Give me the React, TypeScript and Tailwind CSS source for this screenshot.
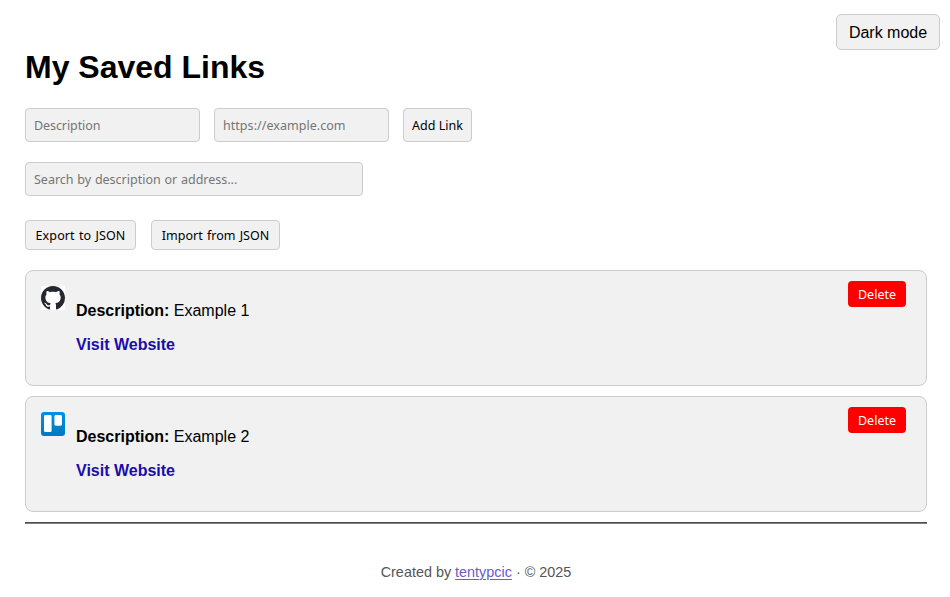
import type { ReactNode } from "react";

const links = [
  { id: 1, description: "Example 1", icon: "github" },
  { id: 2, description: "Example 2", icon: "trello" },
];

function GitHubIcon() {
  return (
    <svg className="block size-6 bg-white" viewBox="0 0 16 16" fill="#24292f" aria-hidden="true">
      <path d="M8 0C3.58 0 0 3.58 0 8c0 3.54 2.29 6.53 5.47 7.59.4.07.55-.17.55-.38 0-.19-.01-.82-.01-1.49-2.01.37-2.53-.49-2.69-.94-.09-.23-.48-.94-.82-1.13-.28-.15-.68-.52-.01-.53.63-.01 1.08.58 1.23.82.72 1.21 1.87.87 2.33.66.07-.52.28-.87.51-1.07-1.78-.2-3.64-.89-3.64-3.95 0-.87.31-1.59.82-2.15-.08-.2-.36-1.02.08-2.12 0 0 .67-.21 2.2.82.64-.18 1.32-.27 2-.27s1.36.09 2 .27c1.53-1.04 2.2-.82 2.2-.82.44 1.1.16 1.92.08 2.12.51.56.82 1.27.82 2.15 0 3.07-1.87 3.75-3.65 3.95.29.25.54.73.54 1.48 0 1.07-.01 1.93-.01 2.2 0 .21.15.46.55.38A8.01 8.01 0 0 0 16 8c0-4.42-3.58-8-8-8z" />
    </svg>
  );
}

function TrelloIcon() {
  return (
    <svg className="block size-6" viewBox="0 0 24 24" aria-hidden="true">
      <defs>
        <linearGradient id="trello-blue" x1="0" y1="0" x2="0" y2="1">
          <stop offset="0" stopColor="#0091e6" />
          <stop offset="1" stopColor="#0079bf" />
        </linearGradient>
      </defs>
      <rect width="24" height="24" rx="3" fill="url(#trello-blue)" />
      <rect x="3" y="3.1" width="7.6" height="17" rx="1.4" fill="#fff" />
      <rect x="13.4" y="3.1" width="7.6" height="10.6" rx="1.4" fill="#fff" />
    </svg>
  );
}

const control =
  "block rounded border border-[#ccc] bg-[#f1f1f1] font-['Noto_Sans',sans-serif] text-[12.5px] outline-none";
const field = `${control} h-[34px] px-2 [word-spacing:0.5px] placeholder:text-[#757575]`;

function Button({ className, children }: { className: string; children: ReactNode }) {
  return (
    <button className={`${control} whitespace-nowrap pt-0.5 text-center text-black ${className}`}>{children}</button>
  );
}

export default function App() {
  return (
    <div className="h-[597px] overflow-hidden bg-white pl-[25px] pr-[23px] font-['Liberation_Sans',Arial,sans-serif] text-base leading-[18px] text-black">
      <button className="absolute right-[10px] top-[14px] h-9 w-[104px] rounded-[5px] border border-[#ccc] bg-[#f1f1f1] pt-0.5 text-center">
        Dark mode
      </button>
      <h1 className="pt-12 text-[32px] font-bold leading-[38px]">My Saved Links</h1>
      <div className="mt-[22px] flex gap-[14px]">
        <input className={`${field} w-[175px] tracking-[-0.08px]`} placeholder="Description" />
        <input className={`${field} w-[175px] tracking-[0.04px]`} placeholder="https://example.com" />
        <Button className="h-[34px] w-[69px]">Add Link</Button>
      </div>
      <input className={`${field} mt-5 w-[338px]`} placeholder="Search by description or address..." />
      <div className="mt-6 flex gap-[15px]">
        <Button className="h-[30px] w-[111px] tracking-[0.12px] [word-spacing:0.8px]">Export to JSON</Button>
        <Button className="h-[30px] w-[129px] [word-spacing:1px]">Import from JSON</Button>
      </div>
      <ul className="mt-5 flex flex-col gap-[10px]">
        {links.map((link) => (
          <li key={link.id} className="flex h-[116px] items-start rounded-lg border border-[#ccc] bg-[#f1f1f1] pl-[15px] pr-5">
            <div className="mt-[15px]">{link.icon === "github" ? <GitHubIcon /> : <TrelloIcon />}</div>
            <div className="ml-[11px] flex-1 pt-[31px]">
              <p>
                <strong>Description:</strong> {link.description}
              </p>
              <p className="mt-4">
                <a href="#" className="font-bold text-[#1a0dab]">Visit Website</a>
              </p>
            </div>
            <button className="mt-[10px] h-[26px] w-[58px] rounded bg-[red] pt-0.5 text-center font-['Noto_Sans',sans-serif] text-[12.5px] text-white">
              Delete
            </button>
          </li>
        ))}
      </ul>
      <hr className="mt-[10px] h-[2px] border-0 border-t border-t-[#4d4d4d] bg-[#808080]" />
      <footer className="mt-[39px] text-center text-[14.4px] leading-[18px] text-[#555]">
        Created by{" "}
        <a href="#" className="text-[#6a5acd] underline decoration-1 underline-offset-2">tentypcic</a> · © 2025
      </footer>
    </div>
  );
}
